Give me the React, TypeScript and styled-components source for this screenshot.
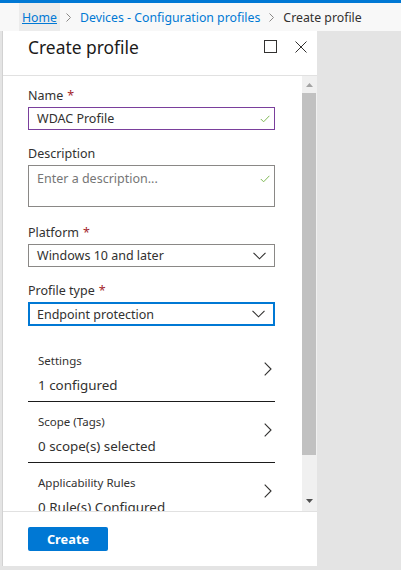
import React from 'react';
import styled, { createGlobalStyle } from 'styled-components';

const Global = createGlobalStyle`
  html, body { margin: 0; padding: 0; }
  body { font-family: "Segoe UI", "Noto Sans", "Open Sans", sans-serif; background: #e4e4e4; color: #323130; }
  * { box-sizing: border-box; }
`;

const Page = styled.div`
  width: 401px;
  height: 570px;
  display: flex;
  flex-direction: column;
  background: #e4e4e4;
  overflow: hidden;
`;

const TopLine = styled.div`
  flex: none;
  height: 3px;
  background: #0078d4;
`;

const Breadcrumb = styled.nav`
  flex: none;
  height: 28px;
  display: flex;
  align-items: stretch;
  padding-left: 19px;
  background: #f8f8f8;
  font-size: 12.3px;
`;

const Crumb = styled.span<{ $link?: boolean; $hover?: boolean }>`
  display: flex;
  align-items: center;
  padding: 0 3px;
  color: ${(p) => (p.$link ? '#0078d4' : '#323130')};
  text-decoration: ${(p) => (p.$hover ? 'underline' : 'none')};
  background: ${(p) => (p.$hover ? '#ececec' : 'transparent')};
  white-space: nowrap;
`;

const CrumbSep = styled.svg`
  align-self: center;
  margin: 1px 6px 0 6px;
  flex: none;
`;

const Main = styled.div`
  flex: 1;
  min-height: 0;
  display: flex;
  padding: 0 0 4px 2px;
`;

const Panel = styled.section`
  width: 315px;
  display: flex;
  flex-direction: column;
  background: #fff;
  border-left: 1px solid #d2d2d2;
`;

const Header = styled.header`
  flex: none;
  height: 45px;
  display: flex;
  align-items: center;
  padding: 0 10px 13px 25px;
  border-bottom: 1px solid #e1e1e1;
`;

const Title = styled.h1`
  flex: 1;
  margin: 0;
  font-size: 17.4px;
  font-weight: 400;
  line-height: 24px;
  color: #1b1a19;
`;

const HeaderIcons = styled.div`
  display: flex;
  align-items: center;
  gap: 18px;
`;

const Body = styled.div`
  flex: 1;
  min-height: 0;
  display: flex;
`;

const Content = styled.div`
  flex: 1;
  min-width: 0;
  overflow: hidden;
  padding: 11px 27px 0 25px;
  display: flex;
  flex-direction: column;
  gap: 15px;
`;

const Field = styled.div`
  display: flex;
  flex-direction: column;
`;

const Label = styled.label`
  font-size: 12.5px;
  line-height: 18px;
  margin-bottom: 2px;
  color: #323130;
`;

const Req = styled.span`
  color: #a4262c;
  margin-left: 4px;
`;

const Box = styled.div<{ $tone: 'valid' | 'plain' | 'focus'; $h: number; $top?: boolean }>`
  height: ${(p) => p.$h}px;
  display: flex;
  align-items: ${(p) => (p.$top ? 'flex-start' : 'center')};
  border: ${(p) =>
    p.$tone === 'valid' ? '1px solid #7a3f9c' : p.$tone === 'focus' ? '2px solid #0078d4' : '1px solid #8a8886'};
  padding: ${(p) => (p.$tone === 'focus' ? '0 8px 0 7px' : p.$top ? '4px 3px 0 8px' : '0 3px 0 8px')};
  font-size: 12.5px;
  color: #323130;
  background: #fff;
`;

const Value = styled.span<{ $placeholder?: boolean }>`
  flex: 1;
  white-space: nowrap;
  color: ${(p) => (p.$placeholder ? '#767676' : '#323130')};
`;

const TextArea = styled(Box)`
  margin-bottom: 2px;
`;

const CheckIcon = styled.svg<{ $down?: number }>`
  flex: none;
  margin-top: ${(p) => p.$down ?? 0}px;
  margin-right: 1px;
`;

const SelectBox = styled(Box)`
  padding-right: 8px;
`;

const RowList = styled.div`
  display: flex;
  flex-direction: column;
`;

const Row = styled.div`
  height: 61px;
  flex: none;
  display: flex;
  align-items: flex-start;
  padding: 12px 3px 0 10px;
  border-bottom: 1px solid #1b1b1b;
  &:last-child {
    border-bottom: none;
  }
`;

const RowText = styled.div`
  flex: 1;
  display: flex;
  flex-direction: column;
`;

const RowTitle = styled.div`
  font-size: 11.5px;
  line-height: 16px;
  margin-bottom: 6px;
  color: #323130;
`;

const RowValue = styled.div`
  font-size: 13.4px;
  line-height: 20px;
  color: #323130;
  white-space: nowrap;
`;

const RowChevron = styled.svg`
  flex: none;
  margin-top: 9px;
`;

const Scrollbar = styled.div`
  width: 15px;
  flex: none;
  display: flex;
  flex-direction: column;
  background: #f0f0f0;
  padding-bottom: 2px;
`;

const ScrollBtn = styled.div`
  height: 17px;
  flex: none;
  display: flex;
  align-items: center;
  justify-content: center;
  padding-right: 1px;
`;

const Track = styled.div`
  flex: 1;
  padding-right: 1px;
`;

const Thumb = styled.div`
  height: 362px;
  background: #c1c1c1;
`;

const Footer = styled.footer`
  flex: none;
  height: 55px;
  border-top: 1px solid #e1e1e1;
  padding: 15px 0 0 25px;
`;

const PrimaryButton = styled.button`
  width: 80px;
  height: 24px;
  border: none;
  border-radius: 2px;
  background: #0078d4;
  color: #fff;
  font-family: inherit;
  font-size: 12.8px;
  font-weight: 700;
  padding: 0;
  cursor: pointer;
`;

const Side = styled.div`
  flex: 1;
`;

const Chev = () => (
  <CrumbSep width="5" height="9" viewBox="0 0 5 9">
    <path d="M0.5 0.5 L4.5 4.5 L0.5 8.5" fill="none" stroke="#8a8886" strokeWidth="1" />
  </CrumbSep>
);

const Check = ({ down }: { down?: number }) => (
  <CheckIcon $down={down} width="10" height="8" viewBox="0 0 10 8">
    <path d="M0.8 4 L3.6 6.8 L9.4 0.8" fill="none" stroke="#7fb955" strokeWidth="1" />
  </CheckIcon>
);

const ChevronDown = () => (
  <svg width="13" height="8" viewBox="0 0 13 8">
    <path d="M0.5 0.8 L6.5 6.8 L12.5 0.8" fill="none" stroke="#323130" strokeWidth="1.1" />
  </svg>
);

const rows = [
  { title: 'Settings', value: '1 configured' },
  { title: 'Scope (Tags)', value: '0 scope(s) selected' },
  { title: 'Applicability Rules', value: '0 Rule(s) Configured' },
];

export default function App() {
  return (
    <>
      <Global />
      <Page>
        <TopLine />
        <Breadcrumb>
          <Crumb $link $hover>Home</Crumb>
          <Chev />
          <Crumb $link>Devices - Configuration profiles</Crumb>
          <Chev />
          <Crumb>Create profile</Crumb>
        </Breadcrumb>
        <Main>
          <Panel>
            <Header>
              <Title>Create profile</Title>
              <HeaderIcons>
                <svg width="13" height="13" viewBox="0 0 13 13">
                  <rect x="0.5" y="0.5" width="12" height="12" fill="none" stroke="#323130" strokeWidth="1" />
                </svg>
                <svg width="12" height="12" viewBox="0 0 12 12">
                  <path d="M0.5 0.5 L11.5 11.5 M11.5 0.5 L0.5 11.5" fill="none" stroke="#323130" strokeWidth="1" />
                </svg>
              </HeaderIcons>
            </Header>
            <Body>
              <Content>
                <Field>
                  <Label>
                    Name<Req>*</Req>
                  </Label>
                  <Box $tone="valid" $h={23}>
                    <Value>WDAC Profile</Value>
                    <Check />
                  </Box>
                </Field>
                <Field>
                  <Label>Description</Label>
                  <TextArea $tone="plain" $h={42} $top>
                    <Value $placeholder>Enter a description...</Value>
                    <Check down={5} />
                  </TextArea>
                </Field>
                <Field>
                  <Label>
                    Platform<Req>*</Req>
                  </Label>
                  <SelectBox $tone="plain" $h={23}>
                    <Value>Windows 10 and later</Value>
                    <ChevronDown />
                  </SelectBox>
                </Field>
                <Field>
                  <Label>
                    Profile type<Req>*</Req>
                  </Label>
                  <SelectBox $tone="focus" $h={24}>
                    <Value>Endpoint protection</Value>
                    <ChevronDown />
                  </SelectBox>
                </Field>
                <RowList>
                  {rows.map((r) => (
                    <Row key={r.title}>
                      <RowText>
                        <RowTitle>{r.title}</RowTitle>
                        <RowValue>{r.value}</RowValue>
                      </RowText>
                      <RowChevron width="8" height="14" viewBox="0 0 8 14">
                        <path d="M0.7 0.7 L7 7 L0.7 13.3" fill="none" stroke="#323130" strokeWidth="1.1" />
                      </RowChevron>
                    </Row>
                  ))}
                </RowList>
              </Content>
              <Scrollbar>
                <ScrollBtn>
                  <svg width="7" height="4" viewBox="0 0 7 4">
                    <path d="M0 4 L3.5 0 L7 4 Z" fill="#a3a3a3" />
                  </svg>
                </ScrollBtn>
                <Track>
                  <Thumb />
                </Track>
                <ScrollBtn>
                  <svg width="7" height="4" viewBox="0 0 7 4">
                    <path d="M0 0 L3.5 4 L7 0 Z" fill="#505050" />
                  </svg>
                </ScrollBtn>
              </Scrollbar>
            </Body>
            <Footer>
              <PrimaryButton>Create</PrimaryButton>
            </Footer>
          </Panel>
          <Side />
        </Main>
      </Page>
    </>
  );
}
